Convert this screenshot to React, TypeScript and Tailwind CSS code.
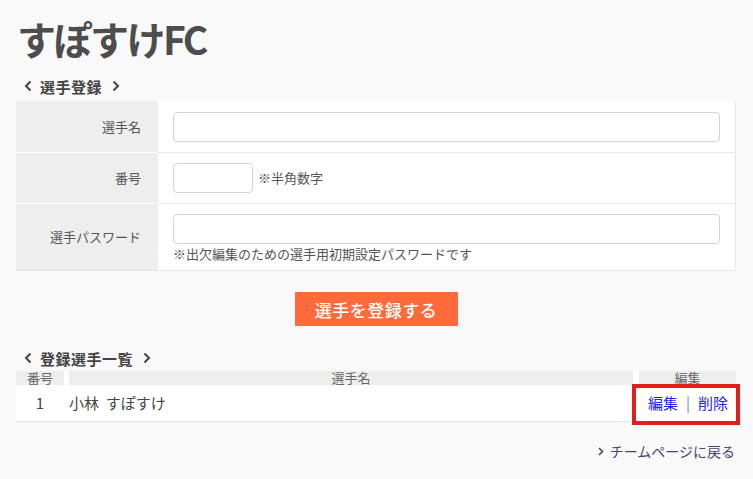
import React from "react";

const Chev = ({ dir }: { dir: "l" | "r" }) => (
  <svg width="8" height="12" viewBox="0 0 8 12" className="inline-block">
    <path
      d={dir === "l" ? "M6.5 1.5 L2 6 L6.5 10.5" : "M1.5 1.5 L6 6 L1.5 10.5"}
      fill="none"
      stroke="#444"
      strokeWidth="2"
    />
  </svg>
);

const SectionTitle = ({ children }: { children: React.ReactNode }) => (
  <div className="flex items-center h-[20px] pl-[8px] text-[15px] font-bold text-[#444] leading-none">
    <Chev dir="l" />
    <span className="ml-[8px] mr-[10px] tracking-[0.5px]">{children}</span>
    <Chev dir="r" />
  </div>
);

export default function App() {
  return (
    <div
      className="min-h-[479px] w-[753px] bg-[#f9f9f9] text-[#555]"
      style={{ fontFamily: '"Noto Sans CJK JP", "Noto Sans", sans-serif' }}
    >
      <div className="px-[16px] w-[752px]">
        <h1 className="pt-[12px] pl-[1px] h-[76px] text-[39px] font-bold leading-[52px] text-[#4d4d4d] tracking-[-2.5px]">
          すぽすけFC
        </h1>
        <SectionTitle>選手登録</SectionTitle>
        <div className="mt-[5px] w-[720px] border-r border-[#e8e8e8] border-b">
          {/* row 1 */}
          <div className="flex h-[51px]">
            <div className="w-[142px] bg-[#eeeeee] flex items-center justify-end pr-[17px] text-[13px]">
              選手名
            </div>
            <div className="flex-1 bg-white flex items-center pl-[15px] pr-[15px]">
              <div className="w-full h-[30px] border border-[#d4d4d4] rounded-[4px] bg-white" />
            </div>
          </div>
          <div className="flex h-px">
            <div className="w-[142px] bg-white" />
            <div className="flex-1 bg-[#eaeaea]" />
          </div>
          {/* row 2 */}
          <div className="flex h-[50px]">
            <div className="w-[142px] bg-[#eeeeee] flex items-center justify-end pr-[17px] text-[13px]">
              番号
            </div>
            <div className="flex-1 bg-white flex items-center pl-[15px]">
              <div className="w-[80px] h-[30px] border border-[#d4d4d4] rounded-[4px] bg-white" />
              <span className="ml-[5px] text-[13px]">※半角数字</span>
            </div>
          </div>
          <div className="flex h-px">
            <div className="w-[142px] bg-white" />
            <div className="flex-1 bg-[#eaeaea]" />
          </div>
          {/* row 3 */}
          <div className="flex h-[66px]">
            <div className="w-[142px] bg-[#eeeeee] flex items-center justify-end pr-[17px] text-[13px]">
              選手パスワード
            </div>
            <div className="flex-1 bg-white flex flex-col pl-[15px] pr-[15px] pt-[10px]">
              <div className="w-full h-[30px] border border-[#d4d4d4] rounded-[4px] bg-white" />
              <div className="text-[13px] leading-[18px] mt-[1px]">
                ※出欠編集のための選手用初期設定パスワードです
              </div>
            </div>
          </div>
        </div>
        <div className="flex justify-center mt-[21px]">
          <button className="w-[163px] h-[34px] bg-[#ff6a3a] text-white text-[17px] font-medium leading-none tracking-[0.5px]">
            選手を登録する
          </button>
        </div>
        <div className="mt-[22px]">
          <SectionTitle>登録選手一覧</SectionTitle>
        </div>
        <div className="relative w-[720px] mt-[3px]">
          <div className="flex h-[14px] text-[13px] leading-[14px] text-[#666]">
            <div className="w-[48px] bg-[#eeeeee] text-center">番号</div>
            <div className="w-[5px] bg-white" />
            <div className="w-[564px] bg-[#eeeeee] text-center">選手名</div>
            <div className="w-[6px] bg-white" />
            <div className="flex-1 bg-[#eeeeee] text-center">編集</div>
          </div>
          <div className="flex h-[37px] bg-white border-b border-[#e6e6e6] items-center text-[15px] text-[#444]">
            <div className="w-[48px] text-center">1</div>
            <div className="w-[5px]" />
            <div className="w-[564px]">小林&nbsp;&nbsp;すぽすけ</div>
            <div className="flex-1 flex justify-end pr-[8px] text-[15px] text-[#2222ee]">
              <span>編集</span>
              <span className="mx-[8px] text-[#8888bb]">|</span>
              <span>削除</span>
            </div>
          </div>
          <div className="absolute left-[616px] top-[13px] w-[108px] h-[41px] border-[4px] border-[#e0201f] pointer-events-none" />
        </div>
        <div className="flex justify-end items-center mt-[19px] pr-[1px] text-[14px] text-[#4f4370]">
          <svg width="6" height="9" viewBox="0 0 6 9" className="mr-[6px]">
            <path d="M1 1 L4.5 4.5 L1 8" fill="none" stroke="#4f4370" strokeWidth="1.6" />
          </svg>
          <span>チームページに戻る</span>
        </div>
      </div>
    </div>
  );
}
